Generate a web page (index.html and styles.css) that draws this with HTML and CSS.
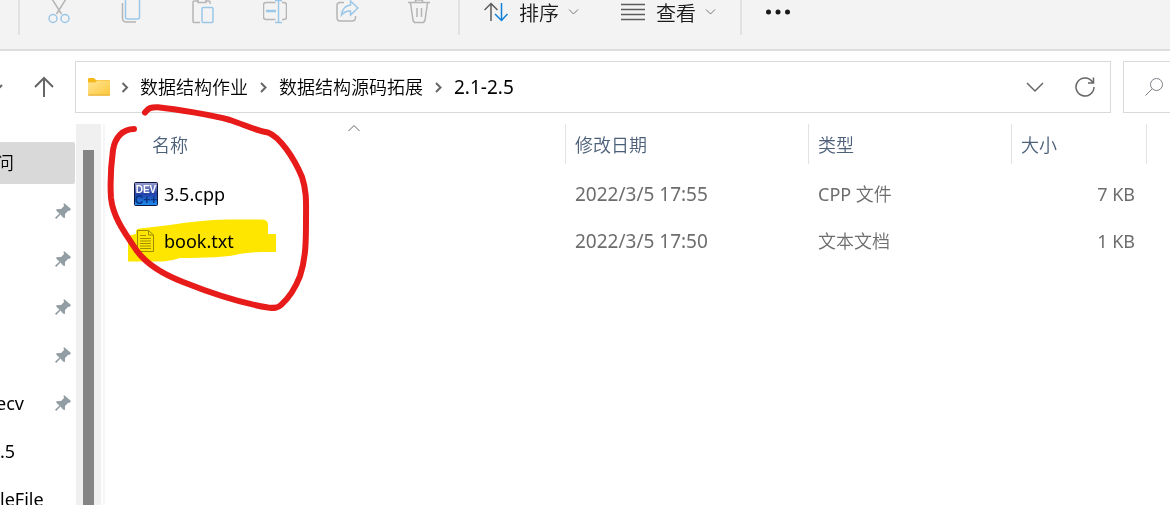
FILE: index.html
```html
<!DOCTYPE html>
<html lang="zh-CN">
<head>
<meta charset="utf-8">
<title>2.1-2.5</title>
<link rel="stylesheet" href="styles.css">
</head>
<body>
<div class="toolbar" role="toolbar">
  <span class="separator"></span>
  <button class="tool" aria-label="剪切"><svg class="icon" viewBox="0 0 24 24"><path class="gray" d="M5-1l9.500 15M19-1L9.500 14"/><circle class="blue" cx="6" cy="18.500" r="4"/><circle class="blue" cx="18" cy="18.500" r="4"/></svg></button>
  <button class="tool" aria-label="复制"><svg class="icon" viewBox="0 0 24 24"><path class="gray" d="M3.500 3v15q0 4 4 4H17"/><rect class="blue" x="6.500" y="-2" width="14" height="21" rx="2"/></svg></button>
  <button class="tool" aria-label="粘贴"><svg class="icon" viewBox="0 0 24 24"><path class="gray" d="M9 22.500H3q-1 0-1-1V2q0-1 1-1h4M15 1h3q1 0 1 1v2M7-1v3.500h8V-1"/><rect class="blue" x="11" y="7.500" width="11" height="15" rx="1"/></svg></button>
  <button class="tool" aria-label="重命名"><svg class="icon" viewBox="0 0 24 24"><path class="gray" d="M12.500 2.500H3q-2.500 0-2.500 2.500v12q0 2.500 2.500 2.500h9.500M19 2.500h2q2.500 0 2.500 2.500v12q0 2.500-2.500 2.500h-2"/><path class="blue" d="M15.500 0v22M12 22.500h7M12 .5h7"/><path class="blue bold" d="M3 11h10"/></svg></button>
  <button class="tool" aria-label="共享"><svg class="icon" viewBox="0 0 24 24"><path class="gray" d="M9 2.500H5Q2 2.500 2 5.500v12q0 3.500 3 3.500h12q3.500 0 3.500-3.500V16"/><path class="blue" d="M15.500 1l7.500 7-7.500 7v-4q-5-.5-9 4 1-9 9-10z"/></svg></button>
  <button class="tool" aria-label="删除"><svg class="icon" viewBox="0 0 24 24"><path class="gray" d="M1 2.500h22M8.500 2V0h7v2M3.500 3l2.500 17q.5 2.500 2.500 2.500h7q2 0 2.500-2.500l2.500-17M10 8v9M14.500 8v9"/></svg></button>
  <span class="separator"></span>
  <button class="command"><svg class="icon" viewBox="0 0 24 24"><path class="dark" d="M7 21V4M.5 10L7 3.500l6.500 6.500"/><path class="accent" d="M17.500 3v17M11 14l6.500 6.500 6-6.500"/></svg><span>排序</span><svg class="drop" viewBox="0 0 11 24"><path d="M1 9.500l4.500 4.500L10 9.500"/></svg></button>
  <button class="command"><svg class="icon" viewBox="0 0 24 24"><path class="dark" d="M0 4.500h24M0 9.500h24M0 14.500h24M0 19.500h24"/></svg><span>查看</span><svg class="drop" viewBox="0 0 11 24"><path d="M1 9.500l4.500 4.500L10 9.500"/></svg></button>
  <span class="separator"></span>
  <button class="command" aria-label="更多"><svg class="icon" viewBox="0 0 24 24"><circle cx="2.500" cy="12" r="2.500"/><circle cx="12" cy="12" r="2.500"/><circle cx="21.500" cy="12" r="2.500"/></svg></button>
</div>

<div class="navigation">
  <div class="history">
    <button class="recent" aria-label="最近位置"><svg viewBox="0 0 12 12"><path d="M1 4l5 5 5-5"/></svg></button>
    <button class="up" aria-label="向上"><svg viewBox="0 0 22 22"><path d="M11 21V2M2 11l9-9 9 9"/></svg></button>
  </div>
  <nav class="address" aria-label="地址">
    <svg class="folder" viewBox="0 0 22 18"><defs><linearGradient id="folder" x1="0" y1="0" x2="1" y2="1"><stop offset="0" stop-color="#ffe596"/><stop offset="1" stop-color="#fcc83c"/></linearGradient></defs><path fill="#f5b81d" d="M0 1q0-1 1-1h5l2 2h13q1 0 1 1v5H0z"/><path fill="url(#folder)" d="M0 4.500h7l2-2h13V17H0z"/><path fill="#e9ae2a" d="M0 16.500h22V17q0 .7-1 .7H1Q0 17.700 0 17z"/></svg>
    <svg class="crumb-arrow" viewBox="0 0 30 14"><path d="M12.500 3l4.500 4.500-4.500 4.500"/></svg>
    <a href="#">数据结构作业</a>
    <svg class="crumb-arrow wide" viewBox="0 0 31 14"><path d="M13 3l4.500 4.500L13 12"/></svg>
    <a href="#">数据结构源码拓展</a>
    <svg class="crumb-arrow wide" viewBox="0 0 31 14"><path d="M13 3l4.500 4.500L13 12"/></svg>
    <a class="latin" href="#">2.1-2.5</a>
    <div class="address-actions">
      <button aria-label="展开"><svg viewBox="0 0 20 20"><path d="M2 6l8 8 8-8"/></svg></button>
      <button aria-label="刷新"><svg viewBox="0 0 20 20"><path d="M17.500 5A9 9 0 1 0 19 10M18.500 .5V6H13"/></svg></button>
    </div>
  </nav>
  <label class="search"><svg viewBox="0 0 20 20"><circle cx="12.500" cy="7.500" r="6"/><path d="M8.200 11.800L1.500 18.500"/></svg><input type="search" aria-label="搜索"></label>
</div>

<div class="workspace">
  <aside class="sidebar">
    <ul>
      <li class="current"><span class="clipped">问</span></li>
      <li><svg class="pin" viewBox="0 0 16 16"><path d="M9 0l7 6-1 1.500-2 .5-3 3v4l-2-.5-2.500-3L1.200 16 0 14.800l4.500-4.300-3-2.500L1.500 6H6l3-3-.5-2z"/></svg></li>
      <li><svg class="pin" viewBox="0 0 16 16"><path d="M9 0l7 6-1 1.500-2 .5-3 3v4l-2-.5-2.500-3L1.200 16 0 14.800l4.500-4.300-3-2.500L1.500 6H6l3-3-.5-2z"/></svg></li>
      <li><svg class="pin" viewBox="0 0 16 16"><path d="M9 0l7 6-1 1.500-2 .5-3 3v4l-2-.5-2.500-3L1.200 16 0 14.800l4.500-4.300-3-2.500L1.500 6H6l3-3-.5-2z"/></svg></li>
      <li><svg class="pin" viewBox="0 0 16 16"><path d="M9 0l7 6-1 1.500-2 .5-3 3v4l-2-.5-2.500-3L1.200 16 0 14.800l4.500-4.300-3-2.500L1.500 6H6l3-3-.5-2z"/></svg></li>
      <li><span class="latin clipped">ecv</span><svg class="pin" viewBox="0 0 16 16"><path d="M9 0l7 6-1 1.500-2 .5-3 3v4l-2-.5-2.500-3L1.200 16 0 14.800l4.500-4.300-3-2.500L1.500 6H6l3-3-.5-2z"/></svg></li>
      <li><span class="latin">.5</span></li>
      <li><span class="latin">leFile</span></li>
    </ul>
  </aside>
  <div class="scrollbar"><div class="thumb"></div></div>
  <main class="content">
    <table>
      <colgroup><col><col class="col-date"><col class="col-type"><col class="col-size"><col class="col-rest"></colgroup>
      <thead>
        <tr>
          <th class="name"><div class="name-head">名称<svg class="sorted" viewBox="0 0 12 8"><path d="M.5 7L6 1.500 11.500 7"/></svg></div></th>
          <th>修改日期</th><th>类型</th><th>大小</th><td class="rest"></td>
        </tr>
      </thead>
      <tbody>
        <tr>
          <td class="name"><div class="file"><svg class="file-icon" viewBox="0 0 24 24"><defs><linearGradient id="dev" x1="0" y1="0" x2="0" y2="1"><stop offset="0" stop-color="#9aa0d0"/><stop offset=".5" stop-color="#2340a8"/><stop offset="1" stop-color="#1d90f5"/></linearGradient></defs><rect x=".5" y=".5" width="23" height="23" rx="1" fill="url(#dev)" stroke="#10163c"/><text class="dev" x="12" y="11" fill="#fff">DEV</text><text class="cpp" x="12" y="22" fill="#0a3580">C++</text></svg><span>3.5.cpp</span></div></td>
          <td class="date">2022/3/5 17:55</td><td><span class="latin">CPP</span> 文件</td><td class="size">7 KB</td><td></td>
        </tr>
        <tr>
          <td class="name"><div class="file"><svg class="file-icon" viewBox="0 0 24 24"><path d="M3.500 1.500h11l5 4.500v16.500h-16z" fill="#fff" stroke="#999"/><path d="M14.500 1.500V6h5M6 6.500h6M6 9.500h11M6 12h11M6 14.500h11M6 17h11M6 19.500h11" fill="none" stroke="#a0a0a0"/></svg><span>book.txt</span></div></td>
          <td class="date">2022/3/5 17:50</td><td>文本文档</td><td class="size">1 KB</td><td></td>
        </tr>
      </tbody>
    </table>
  </main>
</div>

<svg class="ink marker" viewBox="0 0 330 320"><path d="M136 234v-3q0-2 4-2.500L170 225q30-5 57-5.500h34q7 0 7 5V234h8v18h-12q-18 0-29 3-14 3-55 3-8 3-17 3.500H128V238q0-3 8-4z"/></svg>
<svg class="ink pen" viewBox="0 0 330 320"><path d="M145 112.500C148 108 151 107 158 107.200C175 109 212 115 230 120C245 125 257 131 268 132.500C280 137 294 158 302 177C307 192 306 204 306 220C306 240 306 258 300 276C295 289 289 298 281 305C277 309 273 308 268 307.500C240 303 213 294 183 282C165 275 148 266 137 251C124 232 113 217 111 198C110 183 111 165 113 150C115 137 123 129 134 129"/></svg>
</body>
</html>
```

FILE: styles.css
```css
* { box-sizing: border-box; }

body {
  margin: 0;
  height: 100vh;
  display: flex;
  flex-direction: column;
  overflow: hidden;
  background: #fff;
  color: #000;
  font: 350 18px/24px "Noto Sans", "Noto Sans CJK SC", sans-serif;
}

button {
  display: flex;
  align-items: center;
  margin: 0;
  padding: 0;
  border: 0;
  background: none;
  color: inherit;
  font: inherit;
}

svg { display: block; flex: none; }
.latin { font-weight: 400; }

.toolbar {
  display: flex;
  align-items: flex-start;
  flex: none;
  height: 51px;
  padding-left: 15px;
  background: #f3f3f3;
  border-bottom: 2px solid #dedede;
}

.separator { width: 2px; height: 35px; margin: 0 3px; background: #e2e2e2; }
.tool { justify-content: center; width: 72px; height: 24px; }
.command { gap: 11px; height: 24px; padding: 0 21px; font-size: 20px; color: #1a1a1a; }
.command span { padding-top: 3px; }
.icon { width: 24px; height: 24px; fill: none; stroke-width: 1.5; }
.icon circle:not([class]) { fill: #1a1a1a; }
.gray { stroke: #b5b5b5; }
.blue { stroke: #9ac7e8; }
.bold { stroke-width: 2.5; }
.dark { stroke: #5c5c5c; }
.accent { stroke: #0f7fd8; }
.drop { width: 11px; height: 24px; margin-left: -2px; fill: none; stroke: #777; }

.navigation {
  display: flex;
  flex: none;
  padding: 10px 0 11px;
}

.history { display: flex; align-items: center; width: 75px; overflow: hidden; }
.history svg { fill: none; stroke: #666; stroke-width: 2; }
.recent { margin-left: -9px; }
.recent svg { width: 12px; height: 12px; }
.up { margin-left: 30px; }
.up svg { width: 22px; height: 22px; }

.address {
  display: flex;
  align-items: center;
  flex: 1;
  min-width: 0;
  height: 52px;
  padding: 0 15px 0 12px;
  border: 1px solid #d9d9d9;
}

.address a { color: #000; text-decoration: none; white-space: nowrap; }
.address .latin { font-size: 19px; }
.folder { width: 22px; height: 18px; }
.crumb-arrow { width: 30px; height: 14px; fill: none; stroke: #666; stroke-width: 2; }
.crumb-arrow.wide { width: 31px; }
.address-actions { display: flex; gap: 30px; margin-left: auto; }
.address-actions svg { width: 20px; height: 20px; fill: none; stroke: #666; stroke-width: 1.5; }

.search {
  display: flex;
  align-items: center;
  flex: none;
  width: 47px;
  height: 52px;
  margin-left: 12px;
  padding-left: 20px;
  border: 1px solid #d9d9d9;
  border-right: 0;
}

.search svg { width: 20px; height: 20px; fill: none; stroke: #7d7d85; }
.search input { flex: 1; width: 0; min-width: 0; padding: 0; border: 0; outline: 0; }

.workspace { display: flex; flex: 1; min-height: 0; }
.sidebar { flex: none; width: 76px; padding-top: 18px; overflow: hidden; }
.sidebar ul { display: flex; flex-direction: column; gap: 6px; margin: 0; padding: 0; list-style: none; }
.sidebar li { display: flex; align-items: center; flex: none; height: 42px; margin-right: 1px; padding-right: 4px; }
.sidebar .clipped { margin-left: -4px; }
.sidebar .current { background: #d9d9d9; border-radius: 0 2px 2px 0; }
.pin { width: 16px; height: 16px; margin-left: auto; fill: #929da4; }

.scrollbar { flex: none; width: 25px; padding: 26px 7px 0; background: #f0f0f0; }
.thumb { height: 100%; background: #858585; }

.content { flex: 1; min-width: 0; margin-left: 2px; border-left: 2px solid #f6f6f6; }

table { width: 100%; table-layout: fixed; border-collapse: separate; border-spacing: 0; }
.col-date { width: 243px; }
.col-type { width: 203px; }
.col-size { width: 135px; }
.col-rest { width: 24px; }

th { height: 40px; padding: 2px 9px 0; border-left: 1px solid #e3e3e3; color: #4c607a; font-weight: 350; text-align: left; }
th.name { padding: 0 0 0 38px; border-left: 0; }
.name-head { position: relative; height: 40px; padding: 1px 0 0 9px; line-height: 40px; }
.sorted { position: absolute; top: 0; left: calc(50% - 6px); width: 12px; height: 8px; fill: none; stroke: #666; }
.rest { padding: 0; border-left: 1px solid #e3e3e3; }

tbody td { height: 47px; padding: 0 10px; color: #6d6d6d; }
tbody::before { content: ""; display: table-row; height: 6px; }
tbody td.name { padding: 0 0 0 29px; color: #000; font-weight: 400; }
tbody td.date { font-size: 19px; font-weight: 400; }
tbody td.size { padding-right: 11px; font-weight: 400; text-align: right; }
.file { display: flex; align-items: center; gap: 6px; }
.file-icon { width: 24px; height: 24px; }
.dev, .cpp { font-family: "Liberation Sans", sans-serif; font-weight: 700; text-anchor: middle; }
.dev { font-size: 10px; }
.cpp { font-size: 12px; }

.ink { position: absolute; top: 0; left: 0; width: 330px; height: 320px; pointer-events: none; }
.marker { fill: #ffe600; mix-blend-mode: multiply; }
.pen { fill: none; stroke: #e81b1b; stroke-width: 6; stroke-linecap: round; stroke-linejoin: round; }
```
